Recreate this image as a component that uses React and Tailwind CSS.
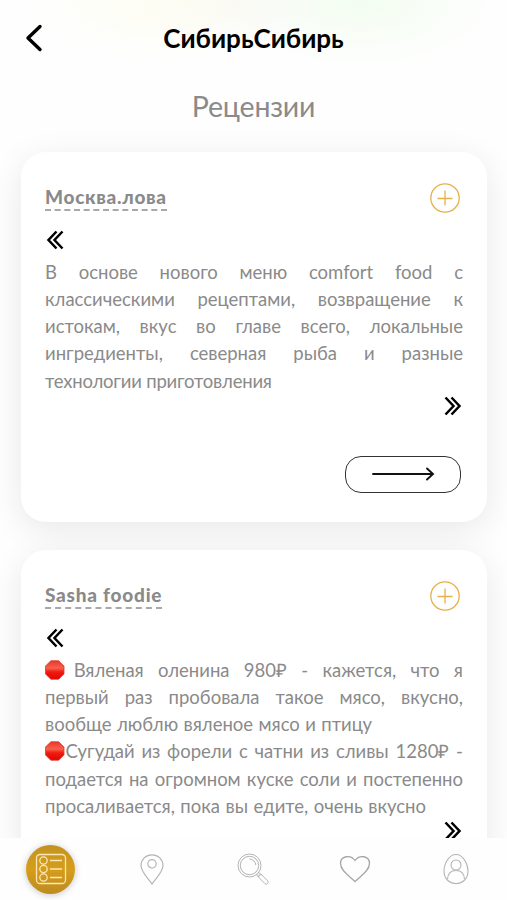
import React from "react";

const reviews = [
  {
    author: "Москва.лова",
    authorStyle: "tracking-[0.7px]",
    more: true,
    lines: [
      { text: "В основе нового меню comfort food с" },
      { text: "классическими рецептами, возвращение к" },
      { text: "истокам, вкус во главе всего, локальные" },
      { text: "ингредиенты, северная рыба и разные" },
      { text: "технологии приготовления", width: "w-[226px] tracking-[-0.2px]" },
    ],
  },
  {
    author: "Sasha foodie",
    authorStyle: "tracking-[0.77px]",
    more: false,
    lines: [
      { text: "Вяленая оленина 980₽ - кажется, что я", stop: "mr-[-5px]", gap: true },
      { text: "первый раз пробовала такое мясо, вкусно," },
      { text: "вообще люблю вяленое мясо и птицу", width: "w-[327px]" },
      { text: "Сугудай из форели с чатни из сливы 1280₽ -", stop: "mr-[1px]" },
      { text: "подается на огромном куске соли и постепенно" },
      { text: "просаливается, пока вы едите, очень вкусно", width: "w-[381px]" },
    ],
  },
];

const Guillemet = ({ className }) => (
  <svg viewBox="0 0 18 20" className={`w-[18px] h-5 ${className}`} fill="none" stroke="#000" strokeWidth="2.5">
    <path d="M10.500 1.500 2.500 10l8 8.500M16.500 1.500 8.500 10l8 8.500" />
  </svg>
);

const StopSign = ({ className }) => (
  <svg viewBox="0 0 20 20" className={`inline-block w-[19.500px] h-5 align-[-3px] ${className}`}>
    <defs>
      <linearGradient id="stopFill" x1="0" y1="0" x2="0" y2="1">
        <stop offset="0" stopColor="#e8372d" />
        <stop offset="0.4" stopColor="#f8604c" />
        <stop offset="0.6" stopColor="#f01b10" />
        <stop offset="1" stopColor="#e00500" />
      </linearGradient>
    </defs>
    <path d="M6 .5h8l5.500 5.500v8L14 19.500H6L.5 14V6z" fill="url(#stopFill)" stroke="#dc3a2c" strokeWidth="0.8" />
  </svg>
);

const PlusCircle = () => (
  <svg viewBox="0 0 30 30" className="w-[30px] h-[30px]" fill="none" stroke="#e6b04a" strokeWidth="1.3">
    <circle cx="15" cy="15" r="14.200" />
    <path d="M15 7.500v15M7.500 15.500h15" />
  </svg>
);

const ReviewCard = ({ review }) => (
  <article className="bg-white rounded-[25px] shadow-[0_8px_34px_rgba(0,0,0,0.09)] pl-[24.500px] pr-6 pt-[31px] h-[369.500px] shrink-0">
    <div className="flex justify-between items-start pr-[3.500px]">
      <h2
        className={`text-[19px] leading-[28px] h-7 font-black text-[#8a8a8a] border-b-2 border-dashed border-[#a8a8a8] ${review.authorStyle}`}
      >
        {review.author}
      </h2>
      <button>
        <PlusCircle />
      </button>
    </div>
    <Guillemet className="mt-[17px] ml-px" />
    <div className="mt-[8.500px] text-[18.500px] leading-[27.300px] text-[#8a8a8a]">
      {review.lines.map((line) => (
        <p
          key={line.text}
          className={`whitespace-nowrap h-[27.300px] text-justify [text-align-last:justify] ${line.width || ""}`}
        >
          {line.stop && <StopSign className={line.stop} />}
          {line.gap && " "}
          {line.text}
        </p>
      ))}
    </div>
    <Guillemet className="rotate-180 ml-auto mr-px mt-px" />
    {review.more && (
      <button className="flex items-center justify-center ml-auto mr-[2px] mt-10 w-[116.500px] h-[37px] rounded-[16px] border-[1.500px] border-[#333]">
        <svg viewBox="0 0 64 16" className="w-16 h-4" fill="none" stroke="#111" strokeWidth="1.9" strokeLinecap="round">
          <path d="M2 8h59M56 2.500 62 8l-6 5.500" />
        </svg>
      </button>
    )}
  </article>
);

const NavBar = () => (
  <nav className="relative z-10 h-[62px] shrink-0 bg-[#fefefe] grid grid-cols-5 items-center justify-items-center">
    <button className="w-[49px] h-[49px] rounded-full bg-linear-to-b from-[#c29322] via-[#d69d1b] to-[#bd8b20] shadow-[0_1px_7px_rgba(0,0,0,0.22)] flex items-center justify-center">
      <svg viewBox="0 0 32 32" className="w-8 h-8" fill="none" stroke="#fbe6b4" strokeWidth="1.3">
        <rect x="1.500" y="1.500" width="29" height="29" rx="3.500" />
        <circle cx="8.500" cy="7.500" r="3.700" />
        <circle cx="8.500" cy="16" r="3.700" />
        <circle cx="8.500" cy="24.500" r="3.700" />
        <path d="M15 7.500h12M15 16h12M15 24.500h12" strokeWidth="1.400" />
      </svg>
    </button>
    <button>
      <svg viewBox="0 0 24 31" className="w-6 h-[31px]" fill="none" stroke="#b5b5b5" strokeWidth="1.2">
        <path d="M12 30C9.500 25.500 1 18.500 1 11.500a11 10.700 0 0 1 22 0C23 18.500 14.500 25.500 12 30Z" />
        <circle cx="12" cy="9.800" r="4.200" />
      </svg>
    </button>
    <button>
      <svg viewBox="0 0 32 32" className="w-8 h-8" fill="none" stroke="#b3b3b3" strokeWidth="1">
        <circle cx="12.500" cy="12.500" r="11.500" />
        <circle cx="12.500" cy="12.500" r="9.200" />
        <path d="M12.500 6a6.500 6.500 0 0 1 6.300 6" />
        <path d="m19.500 21.800 2.300-2.300 2 2-2.300 2.300z" />
        <path d="m21 23.500 2.700-2.600 6.900 6.900a1.900 1.900 0 0 1-2.700 2.800z" />
      </svg>
    </button>
    <button>
      <svg viewBox="0 0 32 28" className="w-8 h-7" fill="none" stroke="#a5a5a5" strokeWidth="1.300">
        <path d="M16 26.500C11 21.500 1.500 16 1.500 8.500 1.500 1 11.500-1 16 5.500 20.500-1 30.500 1 30.500 8.500c0 7.500-9.500 13-14.500 18Z" />
      </svg>
    </button>
    <button>
      <svg viewBox="0 0 26 32" className="w-[26px] h-8" fill="none" stroke="#b5b5b5" strokeWidth="1.1">
        <path d="M13 1.500C6 1.500 1 10.500 1 18c0 8 5.500 12.500 12 12.500S25 26 25 18C25 10.500 20 1.500 13 1.500Z" />
        <circle cx="13" cy="12" r="5" />
        <path d="M4.500 26c.5-5.500 4-8.500 8.500-8.500s8 3 8.500 8.500" />
      </svg>
    </button>
  </nav>
);

export default function App() {
  return (
    <div className="w-[507px] h-[900px] overflow-hidden flex flex-col bg-[#fefefe] font-['Lato','Open_Sans',sans-serif]">
      <header className="h-[76px] shrink-0 grid grid-cols-[68px_1fr_68px] items-center bg-[radial-gradient(ellipse_140px_70px_at_360px_0px,#f3fdf0,transparent),radial-gradient(ellipse_130px_60px_at_155px_0px,#fdfdf2,transparent),radial-gradient(ellipse_100px_45px_at_230px_0px,#f9f7f5,transparent)]">
        <button className="ml-[25px]">
          <svg viewBox="0 0 18 28" className="w-[18px] h-7" fill="none" stroke="#000" strokeWidth="3.4" strokeLinecap="round" strokeLinejoin="round">
            <path d="M15 2.500 3 14l12 11.500" />
          </svg>
        </button>
        <h1 className="text-center text-[26px] font-bold whitespace-nowrap text-black">СибирьСибирь</h1>
      </header>
      <h2 className="shrink-0 h-[76px] pt-[12px] text-center text-[28.500px] leading-[36px] tracking-[-0.2px] text-[#8a8a8a]">
        Рецензии
      </h2>
      <main className="flex-1 min-h-0 overflow-hidden flex flex-col gap-[28.500px] pl-[20.500px] pr-5 -mt-12 pt-12">
        {reviews.map((review) => (
          <ReviewCard key={review.author} review={review} />
        ))}
      </main>
      <NavBar />
    </div>
  );
}
